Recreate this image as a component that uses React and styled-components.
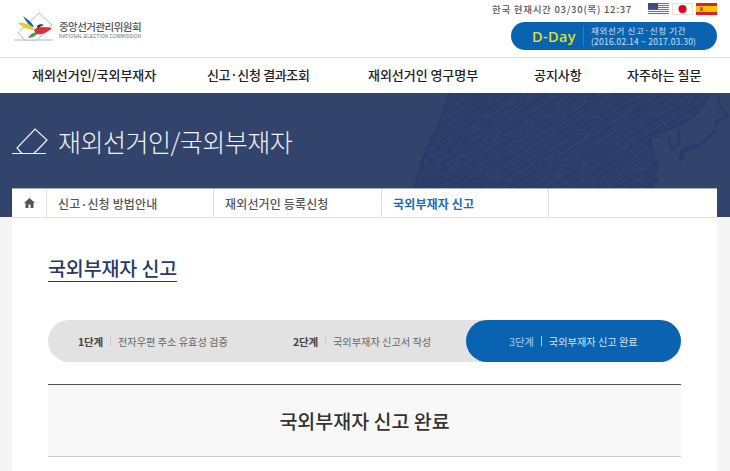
import React from "react";
import styled, { createGlobalStyle } from "styled-components";

const KR = `"Noto Sans CJK KR", "Noto Sans", sans-serif`;

const Global = createGlobalStyle`
  html, body { margin: 0; padding: 0; background: #f5f5f5; }
  body { font-family: ${KR}; overflow: hidden; }
  * { box-sizing: border-box; }
`;

const Page = styled.div`
  width: 730px;
  height: 471px;
  overflow: hidden;
  display: flex;
  flex-direction: column;
`;

const Header = styled.header`
  height: 58px;
  background: #fff;
  border-bottom: 1px solid #e2e2e2;
  display: flex;
  justify-content: space-between;
  padding: 0 13px 0 13px;
`;

const Logo = styled.div`
  display: flex;
  align-items: flex-start;
  gap: 6px;
  padding-top: 12px;
`;

const LogoText = styled.div`
  display: flex;
  flex-direction: column;
  padding-top: 8px;
`;

const LogoKr = styled.span`
  font-size: 10.5px;
  line-height: 13px;
  letter-spacing: -0.55px;
  color: #555;
  font-weight: 500;
`;

const LogoEn = styled.span`
  font-family: "Liberation Sans", sans-serif;
  font-size: 4.5px;
  line-height: 8px;
  letter-spacing: 0.2px;
  color: #666;
`;

const HeaderRight = styled.div`
  display: flex;
  flex-direction: column;
  align-items: flex-end;
  padding-top: 1px;
`;

const TimeRow = styled.div`
  display: flex;
  align-items: center;
  height: 15px;
  gap: 3px;
`;

const Time = styled.span`
  font-size: 9.5px;
  letter-spacing: 0.72px;
  color: #555;
  margin-right: 13px;
  font-weight: 500;
`;

const Flag = styled.svg`
  width: 21px;
  height: 12px;
  display: block;
`;

const DDay = styled.div`
  margin-top: 6px;
  width: 206px;
  height: 28px;
  border-radius: 14px;
  background: #0a63b0;
  display: flex;
  align-items: center;
  padding-left: 21px;
`;

const DDayLabel = styled.span`
  font-family: "Noto Sans", sans-serif;
  font-size: 14.5px;
  font-weight: 500;
  letter-spacing: 0.4px;
  color: #e4e81c;
  width: 52px;
  line-height: 20px;
  border-right: 1px solid #2f7cc0;
  height: 20px;
`;

const DDayText = styled.div`
  margin-left: 7px;
  display: flex;
  flex-direction: column;
  font-size: 8.5px;
  line-height: 11px;
  color: #cfe2f3;
  white-space: nowrap;
`;

const DDayLine = styled.span`
  letter-spacing: ${p => p.$ls}px;
`;

const Nav = styled.nav`
  height: 35px;
  background: #fff;
  display: flex;
  align-items: center;
  padding: 0 0 2px 32px;
  font-size: 13px;
  font-weight: 500;
  color: #222;
  letter-spacing: -0.05px;
`;

const NavItem = styled.a`
  width: ${p => p.$w}px;
  white-space: nowrap;
  letter-spacing: ${p => (p.$tight ? "-0.35px" : "inherit")};
`;

const Hero = styled.section`
  position: relative;
  height: 124px;
  background: #33446c;
  display: flex;
  flex-direction: column;
  justify-content: space-between;
  overflow: hidden;
`;

const Globe = styled.svg`
  position: absolute;
  left: 405px;
  top: 0;
  width: 325px;
  height: 124px;
`;

const HeroTitle = styled.h1`
  position: relative;
  margin: 0;
  padding: 30px 0 0 12px;
  display: flex;
  align-items: center;
  gap: 10px;
  font-size: 25px;
  line-height: 36px;
  font-weight: 300;
  letter-spacing: -0.5px;
  color: #f0f2f6;
`;

const Tabs = styled.div`
  position: relative;
  margin: 0 13px 0 12px;
  height: 29px;
  background: #fff;
  border-top: 1px solid #a9afc0;
  display: flex;
  font-size: 12px;
  font-weight: 500;
  letter-spacing: 0.15px;
`;

const Home = styled.div`
  width: 35px;
  display: flex;
  align-items: center;
  justify-content: center;
  border-right: 1px solid #e2e2e2;
`;

const Tab = styled.a`
  width: ${p => p.$w}px;
  display: flex;
  align-items: center;
  padding-left: 11px;
  color: ${p => (p.$active ? "#1a6cb5" : "#555")};
  font-weight: ${p => (p.$active ? 700 : 500)};
  border-right: 1px solid #e2e2e2;
`;

const Card = styled.main`
  flex: 1;
  margin: 0 13px 0 12px;
  background: #fff;
  border-top: 1px solid #e2e2e2;
  padding: 0 36px;
`;

const PageTitle = styled.h2`
  display: inline-block;
  margin: 37px 0 0 0;
  font-size: 19.5px;
  line-height: 26px;
  font-weight: 500;
  letter-spacing: -0.1px;
  color: #2b3a63;
  border-bottom: 1px solid #2b3a63;
`;

const Steps = styled.div`
  margin-top: 38px;
  height: 42px;
  border-radius: 21px;
  background: #e2e2e2;
  display: flex;
  align-items: center;
  font-size: 10.2px;
`;

const Step = styled.div`
  display: flex;
  align-items: center;
  justify-content: ${p => (p.$active ? "center" : "flex-start")};
  height: 42px;
  width: ${p => p.$w}px;
  padding-left: ${p => p.$pad}px;
  color: ${p => (p.$active ? "#d4e5f5" : "#666")};
  background: ${p => (p.$active ? "#0a63b0" : "transparent")};
  border-radius: 21px;
  white-space: nowrap;
`;

const StepNo = styled.b`
  font-size: 10.5px;
  font-weight: ${p => (p.$active ? 400 : 700)};
  letter-spacing: -0.2px;
  color: ${p => (p.$active ? "#a9cdf0" : "#444")};
`;

const StepSep = styled.i`
  width: 1px;
  height: 10px;
  margin: 0 7px 0 7px;
  background: ${p => (p.$active ? "#a9cdf0" : "#ccc")};
`;

const Banner = styled.div`
  margin-top: 22px;
  height: 73px;
  background: #f8f8f8;
  border-top: 1px solid #555;
  border-bottom: 1px solid #ccc;
  display: flex;
  align-items: center;
  justify-content: center;
  font-size: 19.5px;
  font-weight: 500;
  letter-spacing: 0;
  color: #333;
`;

const BallotIcon = () => (
  <svg width="36" height="30" viewBox="0 0 36 30" fill="none" stroke="#f0f2f6" strokeWidth="1.2">
    <path d="M0 27.5H34" />
    <path d="M10 27.5L5 22L23 3L35 14L25 24.5" />
    <path d="M25 24.5L22 27" />
  </svg>
);

const LogoMark = () => (
  <svg width="40" height="30" viewBox="0 0 40 30">
    <path d="M1 28H40" stroke="#b5b5b5" strokeWidth="1" />
    <path d="M5 21L26 1L39 13L24 28H12Z" fill="#fff" stroke="#bdbdbd" strokeWidth="1" />
    <path d="M10 4C14 7 19 10 21 15C18 15 14 12 10 4Z" fill="#1d6cb0" />
    <path d="M5 11C10 10 17 12 22 18C15 18 9 15 5 11Z" fill="#eccb2a" />
    <path d="M15 26C17 22 21 20 25 20C24 23 20 26 15 26Z" fill="#3da548" />
    <path d="M21 18C25 14 32 15 39 16C33 22 27 23 23 22Z" fill="#d8323c" />
    <path d="M24 14C26 12 29 12 31 13C28 14 26 15 25 17Z" fill="#333" />
  </svg>
);

const HomeIcon = () => (
  <svg width="11" height="10" viewBox="0 0 11 10" fill="#555">
    <path d="M5.5 0L11 5H9.5V10H6.5V6.5H4.5V10H1.5V5H0Z" />
  </svg>
);

const LAND =
  "M10 124L10 95C14 75 22 50 33 33C37 22 41 10 45 0H304L298 13L285 27L268 35L245 42L245 50L248 63L253 73L248 87L247 124Z";

const hatchLines = (() => {
  const lines = [];
  let seed = 7;
  const rnd = n => {
    seed = (seed * 137 + 59) % 1009;
    return (seed / 1009) * n;
  };
  for (let row = 0; row < 110; row++) {
    const y0 = row * 3.6 - 10;
    let x = -10;
    while (x < 330) {
      const len = 22 + rnd(48);
      const yStart = y0 - x * 0.62 + rnd(1.5);
      lines.push(`M${x.toFixed(1)} ${yStart.toFixed(1)}l${len.toFixed(1)} ${(-len * 0.62).toFixed(1)}`);
      x += len + 2 + rnd(5);
    }
  }
  return lines.join("");
})();

const GlobeArt = () => (
  <Globe viewBox="0 0 325 124" fill="none">
    <defs>
      <clipPath id="land">
        <path d={LAND} />
      </clipPath>
    </defs>
    <path d={LAND} fill="#2f406b" />
    <g clipPath="url(#land)">
      <path d={hatchLines} stroke="#293b67" strokeWidth="1.5" />
    </g>
    <g stroke="#293b67" strokeLinejoin="round" strokeLinecap="round">
      <path d="M10 124L10 95C14 75 22 50 33 33C37 22 41 10 45 0" strokeWidth="1.6" />
      <path d="M38 72L45 83L62 83L68 90L92 90" strokeWidth="2.2" />
      <path d="M304 0L298 13L285 27L268 35L245 42L256 44M245 46L248 63L253 73L248 87L247 96" strokeWidth="2.2" />
      <path d="M247 90L252 86" strokeWidth="4" />
      <path d="M263 43L267 57L275 50L273 37" strokeWidth="2" />
      <path d="M275 64L278 58L298 50L308 40L312 28L323 23L315 13L312 0" strokeWidth="2.2" />
      <path d="M276 66L278 58L290 53" strokeWidth="5" />
    </g>
  </Globe>
);

export default function App() {
  return (
    <Page>
      <Global />
      <Header>
        <Logo>
          <LogoMark />
          <LogoText>
            <LogoKr>중앙선거관리위원회</LogoKr>
            <LogoEn>NATIONAL ELECTION COMMISSION</LogoEn>
          </LogoText>
        </Logo>
        <HeaderRight>
          <TimeRow>
            <Time>한국 현재시간 03/30(목) 12:37</Time>
            <Flag viewBox="0 0 21 12">
              <rect width="21" height="12" fill="#f4f4f6" />
              {[0, 2, 4, 6, 8, 10].map(y => (
                <rect key={y} y={y} width="21" height="1" fill="#c9545f" />
              ))}
              <rect width="10" height="6.5" fill="#3e4a80" />
            </Flag>
            <Flag viewBox="0 0 21 12">
              <rect x=".5" y=".5" width="20" height="11" fill="#fff" stroke="#e2e2e2" />
              <circle cx="10.5" cy="6" r="4" fill="#e3001b" />
            </Flag>
            <Flag viewBox="0 0 21 12">
              <rect width="21" height="12" fill="#d8232a" />
              <rect y="3" width="21" height="6" fill="#f7c600" />
              <rect x="4" y="4" width="3" height="4" fill="#b5651d" />
            </Flag>
          </TimeRow>
          <DDay>
            <DDayLabel>D-Day</DDayLabel>
            <DDayText>
              <DDayLine $ls={0.65}>재외선거 신고·신청 기간</DDayLine>
              <DDayLine $ls={0.24}>(2016.02.14 ~ 2017.03.30)</DDayLine>
            </DDayText>
          </DDay>
        </HeaderRight>
      </Header>
      <Nav>
        <NavItem $w={175}>재외선거인/국외부재자</NavItem>
        <NavItem $w={161} $tight>신고·신청 결과조회</NavItem>
        <NavItem $w={166}>재외선거인 영구명부</NavItem>
        <NavItem $w={93}>공지사항</NavItem>
        <NavItem $w={80}>자주하는 질문</NavItem>
      </Nav>
      <Hero>
        <GlobeArt />
        <HeroTitle>
          <BallotIcon />
          재외선거인/국외부재자
        </HeroTitle>
        <Tabs>
          <Home><HomeIcon /></Home>
          <Tab $w={167}>신고·신청 방법안내</Tab>
          <Tab $w={168}>재외선거인 등록신청</Tab>
          <Tab $w={167} $active>국외부재자 신고</Tab>
        </Tabs>
      </Hero>
      <Card>
        <PageTitle>국외부재자 신고</PageTitle>
        <Steps>
          <Step $w={215} $pad={30}>
            <StepNo>1단계</StepNo><StepSep />전자우편 주소 유효성 검증
          </Step>
          <Step $w={203} $pad={30}>
            <StepNo>2단계</StepNo><StepSep />국외부재자 신고서 작성
          </Step>
          <Step $w={215} $active>
            <StepNo $active>3단계</StepNo><StepSep $active />국외부재자 신고 완료
          </Step>
        </Steps>
        <Banner>국외부재자 신고 완료</Banner>
      </Card>
    </Page>
  );
}
